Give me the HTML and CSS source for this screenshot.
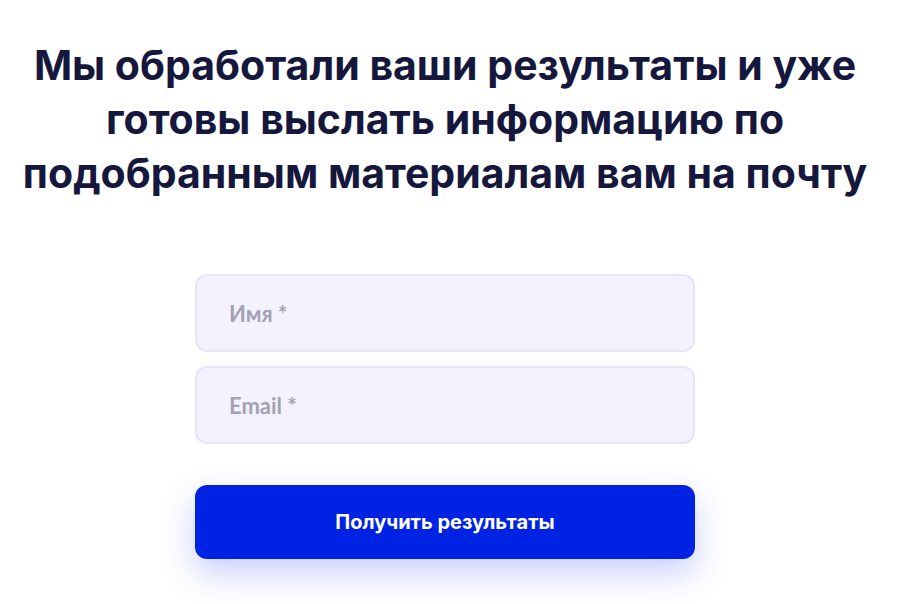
FILE: index.html
```html
<!DOCTYPE html>
<html>
  <head>
    <meta charset="utf-8" />
    <title>Результаты</title>
    <meta name="viewport" content="width=device-width, initial-scale=1" />
    <link rel="stylesheet" href="styles.css">
  </head>

  <body>
    <div class="page">
      <h1 class="title">Мы обработали ваши результаты и уже готовы выслать информацию по подобранным материалам вам на почту</h1>

      <form class="form" action="#">
        <input class="field" type="text" name="name" placeholder="Имя *" />
        <input class="field" type="email" name="email" placeholder="Email *" />
        <button class="submit" type="submit">Получить результаты</button>
      </form>
    </div>
  </body>
</html>
```

FILE: styles.css
```css
* {
    box-sizing: border-box;
}

body {
    margin: 0;
    background-color: #ffffff;
    font-family: 'Inter', 'Noto Sans', sans-serif;
}

.page {
    width: 890px;
    padding: 38px 20px 45px;
}

.title {
    max-width: 850px;
    margin: 0 auto 74px;

    font-size: 41px;
    font-weight: 700;
    line-height: 54px;
    text-align: center;
    color: #16173d;
}

.form {
    display: flex;
    flex-direction: column;
    gap: 14px;
    width: 500px;
    margin: 0 auto;
}

.field {
    height: 78px;
    padding: 0 32px;

    background-color: #f4f2fe;
    border: 2px solid #e7e3fb;
    border-radius: 12px;
    outline: none;

    font-family: 'Lato', sans-serif;
    font-size: 22px;
    font-weight: 700;
    color: #16173d;
}

.field::placeholder {
    color: #a5a1b5;
}

.submit {
    height: 74px;
    margin-top: 27px;

    background-color: #0022e2;
    border: none;
    border-radius: 12px;
    box-shadow: 0 14px 34px rgba(0, 34, 226, 0.22);

    font-family: inherit;
    font-size: 20px;
    font-weight: 700;
    color: #ffffff;
}

.submit:hover {
    cursor: pointer;
}
```
